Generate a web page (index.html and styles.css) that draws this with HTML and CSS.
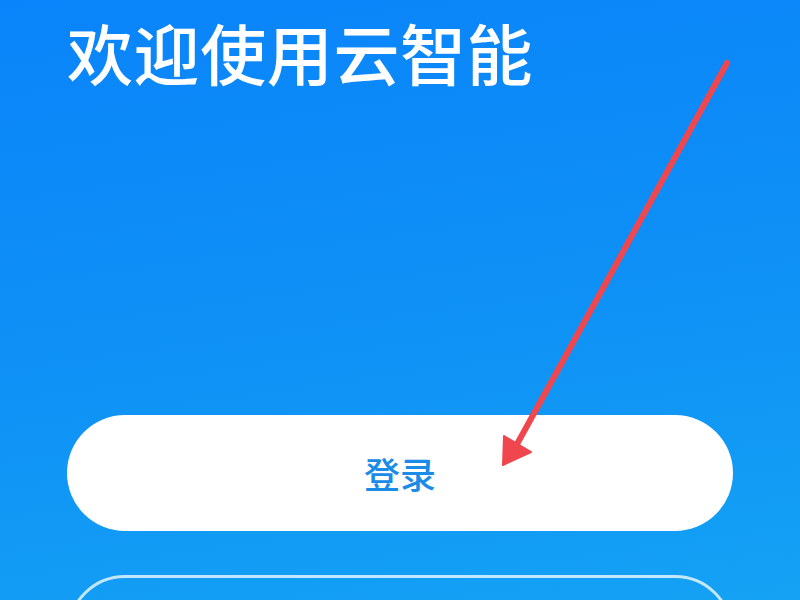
FILE: index.html
```html
<!DOCTYPE html>
<html lang="zh">
<head>
<meta charset="utf-8">
<link rel="stylesheet" href="styles.css">
</head>
<body>
<div class="screen">
  <h1 class="title">欢迎使用云智能</h1>
  <div class="actions">
    <button class="btn btn-primary">登录</button>
    <button class="btn btn-outline" aria-label="注册"></button>
  </div>
  <svg class="arrow" width="800" height="600" viewBox="0 0 800 600">
    <line x1="727" y1="63" x2="516" y2="446" stroke="#f0474f" stroke-width="6" stroke-linecap="round"/>
    <polygon points="503,465 504,436 531,452" fill="#f0474f" stroke="#f0474f" stroke-width="2" stroke-linejoin="round"/>
  </svg>
</div>
</body>
</html>
```
FILE: styles.css
```css
html, body {
  margin: 0;
  padding: 0;
}
body {
  width: 800px;
  height: 600px;
  overflow: hidden;
  font-family: "Noto Sans CJK SC", "Noto Sans", sans-serif;
}
.screen {
  position: relative;
  width: 800px;
  height: 600px;
  box-sizing: border-box;
  padding: 0 67px;
  background: linear-gradient(172deg, #0a84fa 0%, #0e90f6 50%, #14a2f4 100%);
  overflow: hidden;
}
.title {
  margin: 0;
  padding-top: 15px;
  font-size: 66px;
  line-height: 72px;
  font-weight: 500;
  color: #ffffff;
  letter-spacing: 0.6px;
}
.actions {
  margin-top: 328px;
  display: flex;
  flex-direction: column;
  gap: 44px;
}
.btn {
  display: block;
  width: 100%;
  height: 116px;
  border-radius: 58px;
  font-family: inherit;
  font-size: 36px;
  font-weight: 500;
  cursor: pointer;
}
.btn-primary {
  background: #ffffff;
  border: none;
  color: #1a8be6;
}
.btn-outline {
  background: transparent;
  border: 3px solid rgba(255, 255, 255, 0.75);
  color: #ffffff;
}
.arrow {
  position: absolute;
  left: 0;
  top: 0;
  pointer-events: none;
}
```
